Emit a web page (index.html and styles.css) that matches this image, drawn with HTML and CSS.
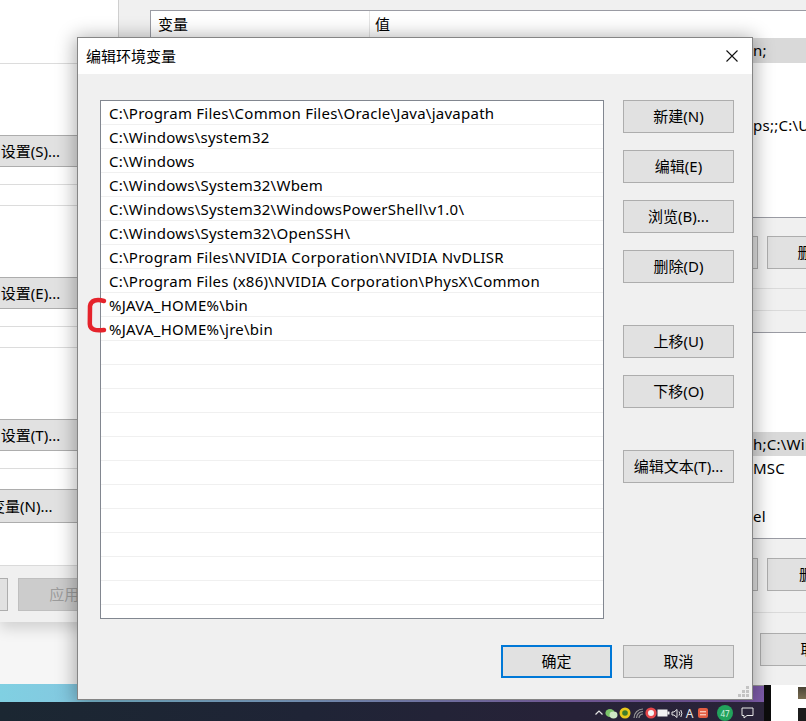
FILE: index.html
```html
<!DOCTYPE html>
<html lang="zh-CN">
<head>
<meta charset="utf-8">
<title>编辑环境变量</title>
<link rel="stylesheet" href="styles.css">
</head>
<body>
<div class="desktop">

  <!-- System properties window (background) -->
  <div class="win sysprops">
    <div class="page">
      <div class="group"><div class="btn sbtn">设置(S)...</div></div>
      <div class="group"><div class="btn sbtn">设置(E)...</div></div>
      <div class="group"><div class="btn sbtn">设置(T)...</div></div>
      <div class="btn envbtn">环境变量(N)...</div>
    </div>
    <div class="sfoot">
      <div class="btn">取消</div>
      <div class="btn disabled">应用(A)</div>
    </div>
  </div>

  <!-- Environment variables window (background) -->
  <div class="win envvars">
    <div class="lv lv1">
      <div class="lv-head"><div class="hc">变量</div><div class="hc hv">值</div></div>
      <div class="lv-row sel"><div></div><div class="tail">n;</div></div>
      <div class="lv-row"><div></div><div class="tail"></div></div>
      <div class="lv-row"><div></div><div class="tail"></div></div>
      <div class="lv-row"><div></div><div class="tail">ps;;C:\Users</div></div>
      <div class="lv-row"><div></div><div class="tail"></div></div>
      <div class="lv-row"><div></div><div class="tail"></div></div>
    </div>
    <div class="btnrow">
      <div class="btn">新建(W)...</div>
      <div class="btn">编辑(I)...</div>
      <div class="btn">删除(D)</div>
    </div>
    <div class="sep"></div>
    <div class="lv lv2">
      <div class="lv-head"><div class="hc">变量</div><div class="hc hv">值</div></div>
      <div class="lv-row s"><div></div><div class="tail"></div></div>
      <div class="lv-row s"><div></div><div class="tail"></div></div>
      <div class="lv-row s"><div></div><div class="tail"></div></div>
      <div class="lv-row s sel"><div></div><div class="tail">h;C:\Windows</div></div>
      <div class="lv-row s"><div></div><div class="tail">MSC</div></div>
      <div class="lv-row s"><div></div><div class="tail"></div></div>
      <div class="lv-row s"><div></div><div class="tail">el</div></div>
      <div class="lv-row s"><div></div><div class="tail"></div></div>
    </div>
    <div class="btnrow btnrow2">
      <div class="btn">新建(W)...</div>
      <div class="btn">编辑(I)...</div>
      <div class="btn">删除(L)</div>
    </div>
    <div class="sep2"></div>
    <div class="footrow">
      <div class="btn">确定</div>
      <div class="btn">取消</div>
    </div>
  </div>

  <!-- Edit environment variable dialog (foreground) -->
  <div class="win dialog">
    <div class="titlebar">
      <div class="title">编辑环境变量</div>
      <div class="close">
        <svg width="12" height="12" viewBox="0 0 12 12"><path d="M0.5 0.5 L11.5 11.5 M11.5 0.5 L0.5 11.5" stroke="#111" stroke-width="1.1" fill="none"/></svg>
      </div>
    </div>
    <div class="dbody">
      <div class="dtop">
        <div class="plist">
          <div class="prow">C:\Program Files\Common Files\Oracle\Java\javapath</div>
          <div class="prow">C:\Windows\system32</div>
          <div class="prow">C:\Windows</div>
          <div class="prow">C:\Windows\System32\Wbem</div>
          <div class="prow">C:\Windows\System32\WindowsPowerShell\v1.0\</div>
          <div class="prow">C:\Windows\System32\OpenSSH\</div>
          <div class="prow">C:\Program Files\NVIDIA Corporation\NVIDIA NvDLISR</div>
          <div class="prow">C:\Program Files (x86)\NVIDIA Corporation\PhysX\Common</div>
          <div class="prow">%JAVA_HOME%\bin</div>
          <div class="prow">%JAVA_HOME%\jre\bin</div>
          <div class="prow"></div><div class="prow"></div><div class="prow"></div>
          <div class="prow"></div><div class="prow"></div><div class="prow"></div>
          <div class="prow"></div><div class="prow"></div><div class="prow"></div>
          <div class="prow"></div><div class="prow"></div><div class="prow"></div>
        </div>
        <div class="side">
          <div class="btn">新建(N)</div>
          <div class="btn m17">编辑(E)</div>
          <div class="btn m17">浏览(B)...</div>
          <div class="btn m17">删除(D)</div>
          <div class="btn m42">上移(U)</div>
          <div class="btn m17">下移(O)</div>
          <div class="btn m42">编辑文本(T)...</div>
        </div>
      </div>
      <div class="dfoot">
        <div class="btn default">确定</div>
        <div class="btn">取消</div>
      </div>
    </div>
    <svg class="grip" width="14" height="12" viewBox="0 0 14 12">
      <rect x="10" y="0" width="3" height="3" fill="#c4c4c4"/>
      <rect x="6" y="4" width="3" height="3" fill="#c4c4c4"/>
      <rect x="10" y="4" width="3" height="3" fill="#c4c4c4"/>
      <rect x="2" y="8" width="3" height="3" fill="#c4c4c4"/>
      <rect x="6" y="8" width="3" height="3" fill="#c4c4c4"/>
      <rect x="10" y="8" width="3" height="3" fill="#c4c4c4"/>
    </svg>
    <svg class="mark" width="22" height="40" viewBox="0 0 22 40">
      <path d="M19 5 C12 3 6 4 5 10 L4.8 28 C5 34 11 35 19 34" stroke="#e5232b" stroke-width="4.5" fill="none" stroke-linecap="round" stroke-linejoin="round"/>
    </svg>
  </div>

  <!-- Taskbar -->
  <div class="taskbar">
    <span class="ti"><svg width="10" height="10" viewBox="0 0 10 10"><path d="M1.5 6.5 L5 3 L8.5 6.5" stroke="#e6e6e6" stroke-width="1.2" fill="none"/></svg></span>
    <span class="ti"><svg width="13" height="11" viewBox="0 0 13 11"><ellipse cx="5" cy="5" rx="4.6" ry="4" fill="#7cc36a"/><ellipse cx="8.5" cy="7" rx="4" ry="3.4" fill="#cfe8c6"/></svg></span>
    <span class="ti"><svg width="12" height="12" viewBox="0 0 12 12"><circle cx="6" cy="6" r="5.5" fill="#e9c81c"/><circle cx="6" cy="6" r="2.8" fill="#3f7d2a"/></svg></span>
    <span class="ti"><svg width="12" height="12" viewBox="0 0 12 12"><path d="M2 11 A9 9 0 0 1 11 2 M4.5 11 A6.5 6.5 0 0 1 11 4.5 M7 11 A4 4 0 0 1 11 7" stroke="#9a9a9a" stroke-width="1.2" fill="none"/></svg></span>
    <span class="ti"><svg width="12" height="12" viewBox="0 0 12 12"><circle cx="6" cy="6" r="4.3" stroke="#e6474b" stroke-width="2.6" fill="#f4f4f4"/></svg></span>
    <span class="ti"><svg width="13" height="10" viewBox="0 0 13 10"><rect x="0.5" y="1.5" width="10" height="7" fill="#f2f2f2"/><rect x="10.5" y="3.5" width="2" height="3" fill="#f2f2f2"/></svg></span>
    <span class="ti"><svg width="12" height="11" viewBox="0 0 12 11"><path d="M1 4 H3 L6 1.5 V9.5 L3 7 H1 Z" stroke="#e8e8e8" stroke-width="1" fill="none"/><path d="M8 3.5 Q9.5 5.5 8 7.5 M9.8 2 Q12 5.5 9.8 9" stroke="#e8e8e8" stroke-width="1" fill="none"/></svg></span>
    <span class="ti ime">A</span>
    <span class="ti"><svg width="12" height="12" viewBox="0 0 12 12"><rect x="1" y="1" width="10" height="10" rx="2" fill="#e35d43"/><rect x="3" y="4" width="6" height="1.4" fill="#f7c4b4"/><rect x="3" y="7" width="6" height="1.4" fill="#f7c4b4"/></svg></span>
    <span class="ti ball">47</span>
    <span class="ti note"><svg width="13" height="12" viewBox="0 0 13 12"><path d="M1 1 H12 V8.5 H6 L3 11 V8.5 H1 Z" stroke="#e8e8e8" stroke-width="1" fill="none"/></svg></span>
  </div>

  <div class="corner">
    <div class="thumb"></div>
    <div class="thumb t2"></div>
  </div>
</div>
</body>
</html>
```

FILE: styles.css
```css
* { box-sizing: border-box; }

html, body {
  margin: 0;
  padding: 0;
}

body {
  width: 806px;
  height: 721px;
  overflow: hidden;
  font-family: "Noto Sans", "Noto Sans CJK SC", sans-serif;
  font-size: 15px;
  color: #000;
}

.desktop {
  position: relative;
  width: 806px;
  height: 721px;
  overflow: hidden;
  background:
    linear-gradient(#f6f6f6, #f6f6f6) 0 0 / 100% 684px no-repeat,
    linear-gradient(90deg, #80d0e2 0, #8cb2da 35%, #8a6cb6 70%, #7b58a8 100%);
}

.win {
  position: absolute;
}

/* ---------- shared button ---------- */
.btn {
  flex: none;
  width: 111px;
  height: 33px;
  border: 1px solid #adadad;
  background: #e1e1e1;
  display: flex;
  align-items: center;
  justify-content: center;
  white-space: nowrap;
  font-size: 15px;
  line-height: 1;
}

.btn.default {
  border: 2px solid #0078d7;
}

.btn.disabled {
  background: #cccccc;
  border-color: #bfbfbf;
  color: #9c9c9c;
}

/* ---------- system properties window ---------- */
.sysprops {
  left: 0;
  top: 0;
  width: 130px;
  height: 622px;
  background: #f0f0f0;
  display: flex;
  flex-direction: column;
  overflow: hidden;
  box-shadow: 0 6px 14px rgba(0, 0, 0, 0.16);
}

.page {
  height: 566px;
  background: #fff;
  border-bottom: 1px solid #dadada;
  padding-top: 63px;
}

.group {
  height: 122px;
  border-top: 1px solid #dcdcdc;
  border-bottom: 1px solid #dcdcdc;
  padding-top: 71px;
}

.group + .group {
  margin-top: 20px;
}

.sbtn {
  height: 32px;
  margin-left: -25px;
}

.envbtn {
  width: 160px;
  height: 34px;
  margin-top: 20px;
  margin-left: -75px;
  justify-content: flex-start;
  padding-left: 34px;
}

.sfoot {
  display: flex;
  gap: 10px;
  padding-top: 12px;
  margin-left: -103px;
}

/* ---------- environment variables window ---------- */
.envvars {
  left: 118px;
  top: 0;
  width: 780px;
  height: 686px;
  background: #f0f0f0;
  border-left: 1px solid #cfcfcf;
  border-bottom: 1px solid #9a9a9a;
  padding: 10px 0 0 31px;
}

.lv {
  width: 740px;
  background: #fff;
  border: 1px solid #9a9ba3;
  overflow: hidden;
}

.lv1 { height: 208px; }
.lv2 { height: 207px; margin-top: 21px; }

.lv-head {
  display: grid;
  grid-template-columns: 218px 1fr;
  height: 27px;
  align-items: center;
}

.hc {
  padding-left: 7px;
  line-height: 27px;
}

.hv {
  border-left: 1px solid #e5e5e5;
  padding-left: 5px;
}

.lv-row {
  display: grid;
  grid-template-columns: 218px 1fr;
  height: 25px;
  line-height: 25px;
  white-space: nowrap;
}

.lv-row.s {
  height: 24px;
  line-height: 24px;
}

.lv-row.sel {
  background: #d9d9d9;
}

.tail {
  padding-left: 384px;
  letter-spacing: 0.25px;
}

.btnrow {
  display: flex;
  gap: 9px;
  margin-top: 18px;
  margin-left: 377px;
}

.btnrow2 {
  margin-top: 19px;
}

.sep {
  margin-top: 19px;
  height: 23px;
  border-top: 1px solid #dadada;
  border-bottom: 1px solid #dadada;
}

.sep2 {
  margin-top: 21px;
  border-top: 1px solid #dadada;
}

.footrow {
  display: flex;
  gap: 10px;
  margin-top: 20px;
  margin-left: 489px;
}

/* ---------- dialog ---------- */
.dialog {
  left: 77px;
  top: 37px;
  width: 676px;
  height: 663px;
  background: #f0f0f0;
  border: 1px solid #858585;
  box-shadow: 0 2px 18px 2px rgba(0, 0, 0, 0.33);
  display: flex;
  flex-direction: column;
}

.titlebar {
  height: 36px;
  background: #fff;
  display: flex;
  align-items: center;
  justify-content: space-between;
  padding-left: 8px;
}

.title {
  font-size: 15px;
  margin-top: -2px;
}

.close {
  width: 40px;
  height: 36px;
  display: flex;
  align-items: center;
  justify-content: center;
}

.dbody {
  flex: 1;
  display: flex;
  flex-direction: column;
  padding: 26px 18px 0 22px;
}

.dtop {
  display: flex;
  gap: 19px;
}

.plist {
  width: 504px;
  height: 519px;
  background: #fff;
  border: 1px solid #828790;
  overflow: hidden;
}

.prow {
  height: 24px;
  line-height: 23px;
  padding-top: 1px;
  border-bottom: 1px solid #f0f0f0;
  padding-left: 8px;
  white-space: nowrap;
  letter-spacing: 0.25px;
}

.side {
  display: flex;
  flex-direction: column;
  width: 111px;
}

.m17 { margin-top: 17px; }
.m42 { margin-top: 42px; }

.dfoot {
  display: flex;
  justify-content: flex-end;
  gap: 11px;
  margin-top: 26px;
}

.grip {
  position: absolute;
  right: 2px;
  bottom: 1px;
}

.mark {
  position: absolute;
  left: 7px;
  top: 258px;
}

/* ---------- taskbar ---------- */
.taskbar {
  position: absolute;
  left: 0;
  bottom: 0;
  width: 764px;
  height: 19px;
  background: linear-gradient(90deg, #1b2732 0, #1f2436 40%, #272238 75%, #2a2339 100%);
  display: flex;
  align-items: center;
  padding-left: 592px;
  padding-top: 3px;
}

.ti {
  flex: none;
  width: 13px;
  height: 14px;
  display: flex;
  align-items: center;
  justify-content: center;
}

.ime {
  color: #e6e6e6;
  font-size: 12px;
  font-family: "Noto Sans", sans-serif;
}

.ball {
  width: 16px;
  height: 16px;
  margin-left: 8px;
  border-radius: 50%;
  background: #22a35c;
  color: #d9f3e2;
  font-size: 8px;
  font-family: "Noto Sans", sans-serif;
}

.note {
  margin-left: 8px;
}

.corner {
  position: absolute;
  left: 764px;
  top: 685px;
  width: 42px;
  height: 36px;
  background: #fff;
  border-left: 7px solid #0b0b0b;
  display: flex;
  flex-direction: column;
  align-items: flex-end;
  gap: 9px;
  padding-top: 2px;
}

.thumb {
  width: 8px;
  height: 12px;
  background: linear-gradient(#4a4436, #7a6d52);
}

.thumb.t2 {
  height: 13px;
  background: #1c1c1c;
}
```
